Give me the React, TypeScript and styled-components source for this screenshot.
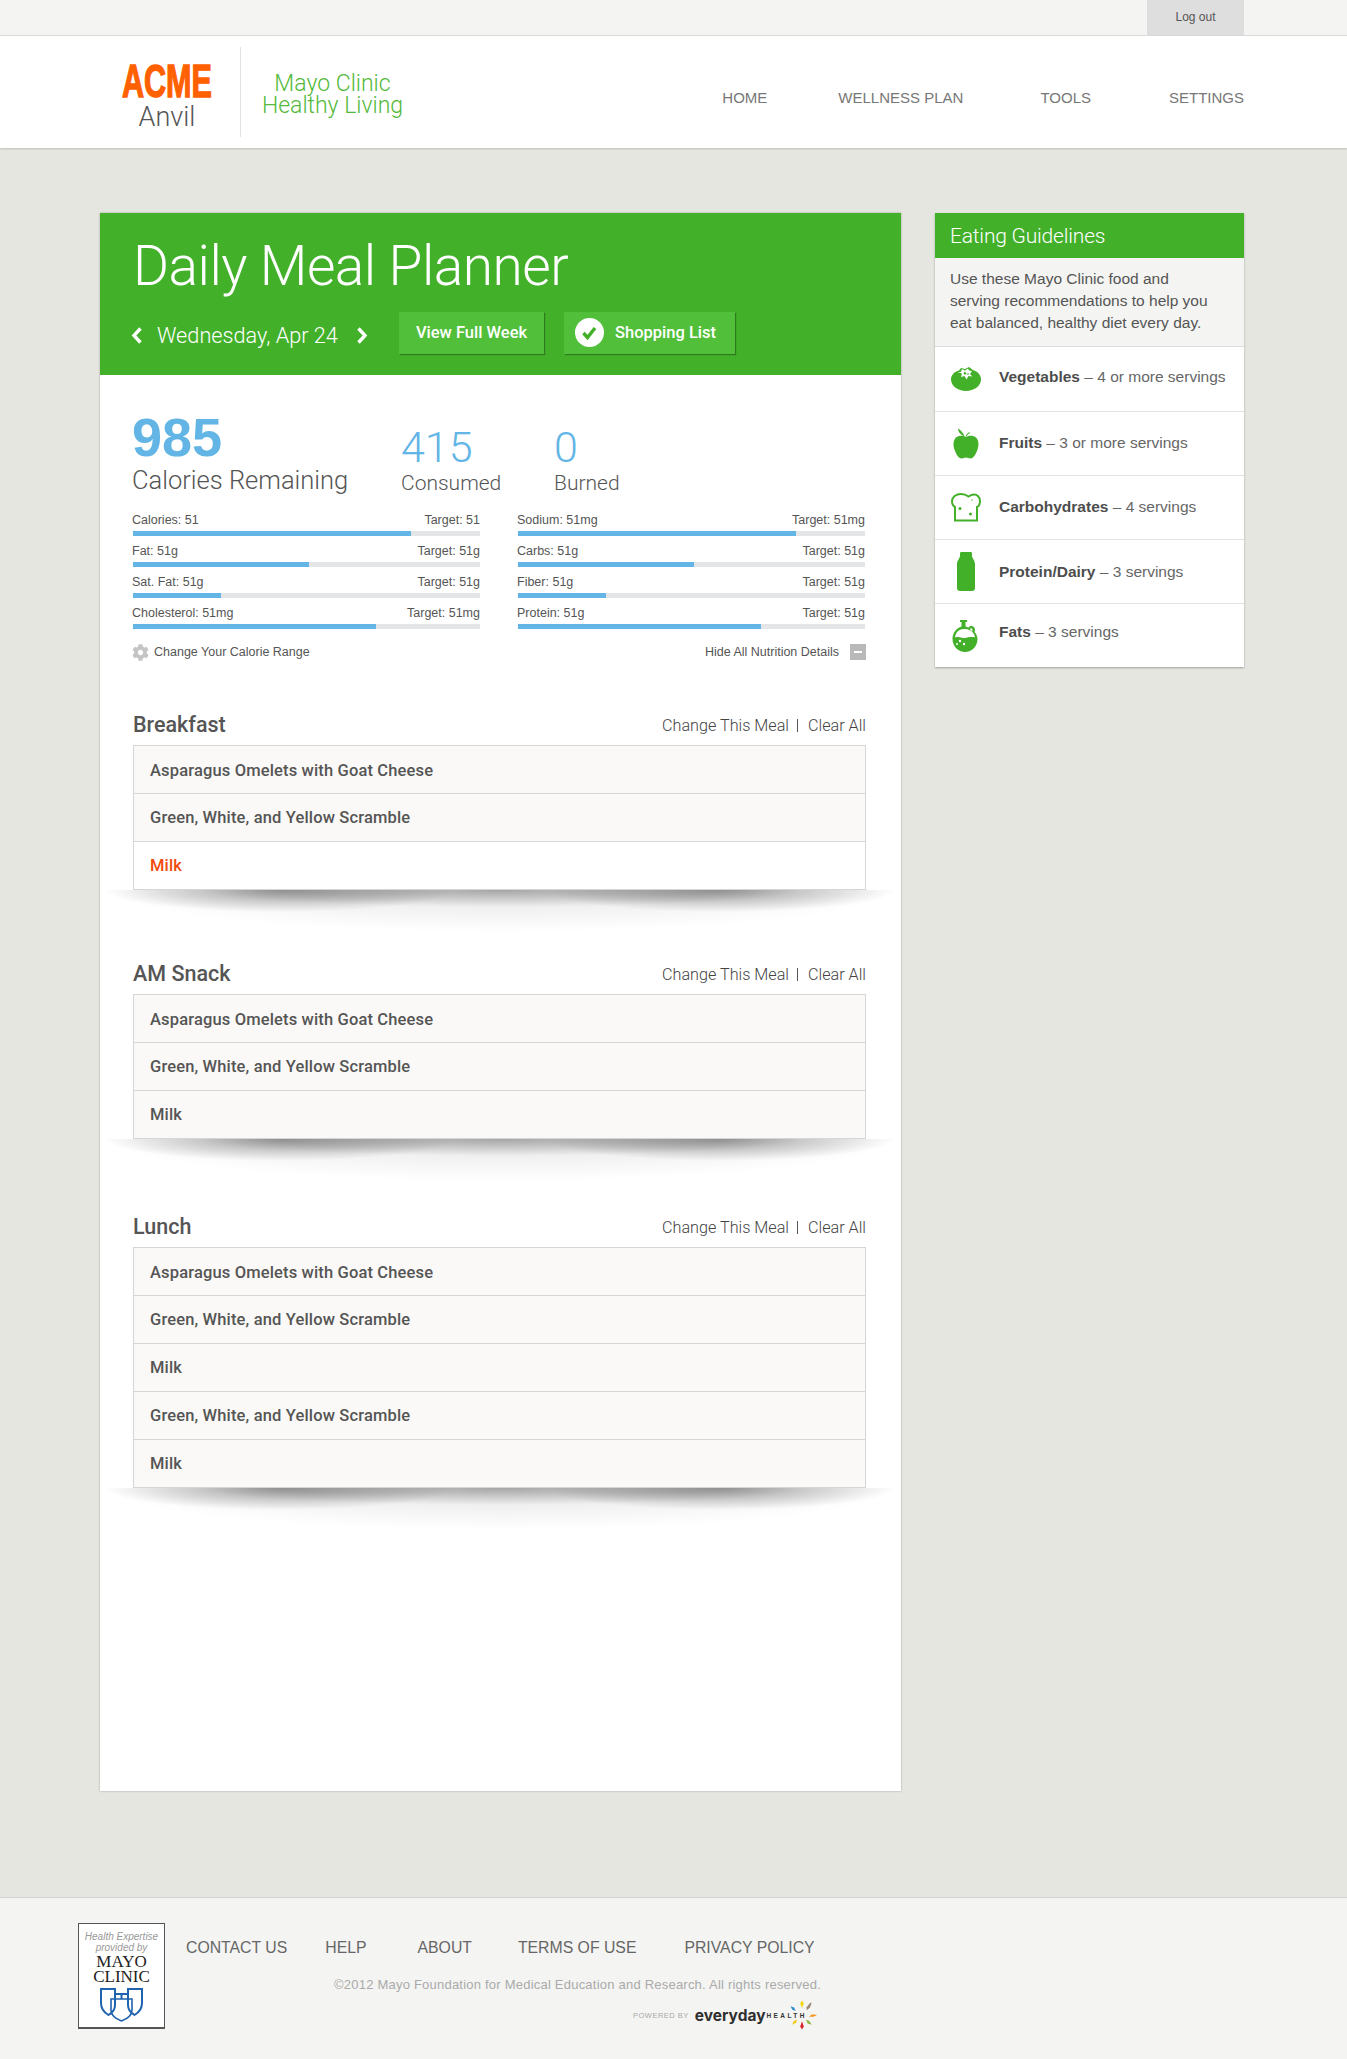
import styled, { createGlobalStyle } from "styled-components";
import { FaCog } from "react-icons/fa";

const SANS = `"Liberation Sans", Arial, sans-serif`;
const LIGHT = `Roboto, "Liberation Sans", sans-serif`;
const GREEN = "#43b02a";

interface INutrient {
    label: string;
    target: string;
    percent: number;
}

interface IMeal {
    title: string;
    gap: number;
    items: { name: string; highlight?: boolean }[];
}

const leftNutrients: INutrient[] = [
    { label: "Calories: 51", target: "Target: 51", percent: 80 },
    { label: "Fat: 51g", target: "Target: 51g", percent: 50.6 },
    { label: "Sat. Fat: 51g", target: "Target: 51g", percent: 25.5 },
    { label: "Cholesterol: 51mg", target: "Target: 51mg", percent: 70 },
];

const rightNutrients: INutrient[] = [
    { label: "Sodium: 51mg", target: "Target: 51mg", percent: 80 },
    { label: "Carbs: 51g", target: "Target: 51g", percent: 50.6 },
    { label: "Fiber: 51g", target: "Target: 51g", percent: 25.5 },
    { label: "Protein: 51g", target: "Target: 51g", percent: 70 },
];

const OMELET = "Asparagus Omelets with Goat Cheese";
const SCRAMBLE = "Green, White, and Yellow Scramble";

const meals: IMeal[] = [
    {
        title: "Breakfast",
        gap: 47,
        items: [{ name: OMELET }, { name: SCRAMBLE }, { name: "Milk", highlight: true }],
    },
    {
        title: "AM Snack",
        gap: 70,
        items: [{ name: OMELET }, { name: SCRAMBLE }, { name: "Milk" }],
    },
    {
        title: "Lunch",
        gap: 74,
        items: [
            { name: OMELET },
            { name: SCRAMBLE },
            { name: "Milk" },
            { name: SCRAMBLE },
            { name: "Milk" },
        ],
    },
];

const GlobalStyle = createGlobalStyle`
    html, body {
        margin: 0;
        padding: 0;
        background: #e6e6e0;
        font-family: ${SANS};
        color: #555;
    }
    * {
        box-sizing: border-box;
    }
`;

const TopBar = styled.div`
    height: 36px;
    background: #f4f4f2;
    border-bottom: 1px solid #dcdcda;
    display: flex;
    justify-content: flex-end;
    padding-right: 103px;
`;

const LogOut = styled.a`
    width: 97px;
    height: 35px;
    background: #dedede;
    color: #555;
    font-size: 12px;
    display: flex;
    align-items: center;
    justify-content: center;
    padding-bottom: 1px;
`;

const Header = styled.header`
    height: 112px;
    background: #fff;
    box-shadow: 0 1px 2px rgba(0, 0, 0, 0.18);
    display: flex;
    align-items: center;
    padding: 0 103px 0 122px;
`;

const Brand = styled.div`
    width: 119px;
    height: 90px;
    border-right: 1px solid #e2e2e0;
    display: flex;
    flex-direction: column;
    align-items: flex-start;
`;

const Acme = styled.div`
    width: 90px;
    margin-top: 15px;
    height: 37px;
    line-height: 37px;
    font-size: 47px;
    font-weight: 700;
    color: #ff6000;
    -webkit-text-stroke: 1.4px #ff6000;
    white-space: nowrap;
    transform: scaleX(0.65);
    transform-origin: left center;
`;

const Anvil = styled.div`
    width: 90px;
    margin-top: 4px;
    text-align: center;
    font-family: ${LIGHT};
    font-weight: 300;
    font-size: 27px;
    line-height: 28px;
    color: #555;
`;

const Program = styled.div`
    margin: 5px 0 0 15px;
    width: 153px;
    text-align: center;
    font-family: ${LIGHT};
    font-weight: 300;
    font-size: 23px;
    line-height: 22px;
    color: #52b93a;
`;

const Nav = styled.nav`
    margin: 10px 0 0 auto;
    display: flex;
    font-size: 15px;
    color: #777;
`;

const NavLink = styled.a<{ $gap: number }>`
    margin-left: ${(props) => props.$gap}px;
`;

const Main = styled.main`
    display: flex;
    align-items: flex-start;
    gap: 34px;
    padding: 65px 103px 0 100px;
`;

const Planner = styled.section`
    width: 801px;
    height: 1578px;
    background: #fff;
    box-shadow: 0 0 2px rgba(0, 0, 0, 0.3);
`;

const PlannerHead = styled.div`
    height: 162px;
    background: ${GREEN};
    color: #fff;
    padding: 20px 0 0 33px;
`;

const Title = styled.h1`
    margin: 0;
    font-family: ${LIGHT};
    font-weight: 300;
    font-size: 55px;
    line-height: 66px;
    letter-spacing: -0.5px;
`;

const DateRow = styled.div`
    display: flex;
    align-items: center;
    margin-top: 13px;
    margin-left: -2px;
    height: 42px;
`;

const Chevron = styled.svg`
    width: 12px;
    height: 17px;
    flex: none;
    fill: none;
    stroke: #fff;
    stroke-width: 3.4;
    margin-top: 4px;
`;

const DateText = styled.span`
    font-family: ${LIGHT};
    font-weight: 300;
    font-size: 21.7px;
    margin: 4px 18px 0 14px;
    width: 181px;
    white-space: nowrap;
`;

const Button = styled.a<{ $width: number; $gap: number }>`
    width: ${(props) => props.$width}px;
    height: 42px;
    background: #52bf3a;
    box-shadow: 1px 1px 1px rgba(0, 0, 0, 0.3);
    font-family: ${LIGHT};
    font-weight: 500;
    font-size: 16.5px;
    display: flex;
    align-items: center;
    justify-content: center;
    gap: 11px;
    margin-left: ${(props) => props.$gap}px;
    padding-bottom: 2px;
    color: #fff;
`;

const CheckBadge = styled.svg`
    width: 29px;
    height: 29px;
    margin-left: -8px;
`;

const PlannerBody = styled.div`
    padding: 0 35px 0 32px;
`;

const Stats = styled.div`
    display: flex;
    height: 136px;
`;

const Stat = styled.div<{ $width: number; $top: number }>`
    width: ${(props) => props.$width}px;
    padding-top: ${(props) => props.$top}px;
`;

const BigNumber = styled.div`
    font-size: 54px;
    line-height: 54px;
    font-weight: 700;
    color: #62b5e5;
`;

const StatNumber = styled.div`
    font-family: ${LIGHT};
    font-weight: 300;
    font-size: 43px;
    line-height: 44px;
    color: #62b5e5;
`;

const BigLabel = styled.div`
    font-family: ${LIGHT};
    font-weight: 300;
    font-size: 25.5px;
    line-height: 30px;
    margin-top: 1px;
    white-space: nowrap;
`;

const StatLabel = styled.div`
    font-family: ${LIGHT};
    font-weight: 300;
    font-size: 21px;
    line-height: 28px;
`;

const NutritionGrid = styled.div`
    display: grid;
    grid-template-columns: 347px 347px;
    column-gap: 38px;
    padding-left: 1px;
`;

const NutrientRow = styled.div`
    height: 31px;
`;

const NutrientText = styled.div`
    display: flex;
    justify-content: space-between;
    font-size: 12.5px;
    line-height: 18px;
    height: 18px;
    margin-left: -1px;
    color: #555;
`;

const Track = styled.div`
    height: 5px;
    margin-top: 2px;
    background: #e3e5e7;
`;

const Fill = styled.div`
    height: 100%;
    background: #62b5e5;
`;

const DetailRow = styled.div`
    display: flex;
    justify-content: space-between;
    align-items: center;
    margin-top: 5px;
    height: 24px;
    font-size: 12.5px;
    color: #555;
`;

const RangeLink = styled.a`
    display: flex;
    align-items: center;
    gap: 5px;
    svg {
        width: 17px;
        height: 17px;
        color: #c4c4c4;
    }
`;

const HideLink = styled.a`
    display: flex;
    align-items: center;
    gap: 11px;
`;

const MinusBox = styled.span`
    width: 16px;
    height: 16px;
    background: #b9b9b9;
    display: flex;
    align-items: center;
    justify-content: center;
    &::before {
        content: "";
        width: 8px;
        height: 2px;
        background: #fff;
    }
`;

const MealSection = styled.section<{ $gap: number }>`
    margin-top: ${(props) => props.$gap}px;
    margin-left: 1px;
`;

const MealHead = styled.div`
    display: flex;
    justify-content: space-between;
    align-items: center;
    height: 26px;
    margin-bottom: 8px;
`;

const MealTitle = styled.h2`
    margin: 0;
    font-family: ${LIGHT};
    font-weight: 500;
    font-size: 21.5px;
    color: #555;
`;

const MealActions = styled.div`
    font-family: ${LIGHT};
    font-weight: 300;
    font-size: 16.2px;
    color: #444;
    margin-top: 3px;
    display: flex;
    align-items: center;
`;

const ActionDivider = styled.span`
    width: 1px;
    height: 13px;
    background: #555;
    margin: 0 10px 0 8px;
`;

const MealBox = styled.div`
    position: relative;
    border: 1px solid #d6d6d4;
    &::after {
        content: "";
        position: absolute;
        top: 100%;
        left: -34px;
        right: -36px;
        height: 44px;
        margin-top: 1px;
        pointer-events: none;
        background:
            radial-gradient(ellipse 175px 22px at 180px 0, rgba(0, 0, 0, 0.36), transparent),
            radial-gradient(ellipse 175px 22px at 620px 0, rgba(0, 0, 0, 0.36), transparent),
            radial-gradient(ellipse 300px 17px at 50% 0, rgba(0, 0, 0, 0.28), transparent),
            radial-gradient(ellipse 398px 42px at 50% 0, rgba(0, 0, 0, 0.1), transparent);
    }
`;

const MealItem = styled.div<{ $highlight?: boolean }>`
    height: 47px;
    padding: 1px 0 0 16px;
    display: flex;
    align-items: center;
    font-family: ${LIGHT};
    font-weight: 500;
    font-size: 16.5px;
    letter-spacing: 0.15px;
    background: ${(props) => (props.$highlight ? "#fff" : "#faf9f7")};
    color: ${(props) => (props.$highlight ? "#f2490c" : "#555")};
    & + & {
        box-sizing: content-box;
        padding-top: 0;
        border-top: 1px solid #d6d6d4;
    }
`;

const Sidebar = styled.aside`
    width: 309px;
    background: #fff;
    box-shadow: 0 1px 2px rgba(0, 0, 0, 0.3);
`;

const SideHead = styled.div`
    height: 45px;
    background: ${GREEN};
    color: #fff;
    font-family: ${LIGHT};
    font-weight: 300;
    font-size: 21px;
    letter-spacing: -0.2px;
    padding-left: 15px;
    display: flex;
    align-items: center;
`;

const SideIntro = styled.p`
    margin: 0;
    height: 89px;
    background: #f4f4f2;
    border-bottom: 1px solid #ddd;
    padding: 10px 30px 0 15px;
    font-size: 15.5px;
    line-height: 22px;
    color: #555;
`;

const GuideRow = styled.div`
    height: 64px;
    display: flex;
    align-items: center;
    & + & {
        border-top: 1px solid #e2e2de;
    }
`;

const GuideIcon = styled.div`
    width: 64px;
    flex: none;
    display: flex;
    justify-content: center;
    padding-right: 3px;
    svg {
        display: block;
        fill: ${GREEN};
    }
`;

const GuideText = styled.div<{ $lift?: number }>`
    font-size: 15.5px;
    color: #666;
    white-space: nowrap;
    margin-bottom: ${(props) => props.$lift ?? 0}px;
    strong {
        color: #4d4d4d;
    }
`;

const Footer = styled.footer`
    margin-top: 106px;
    height: 162px;
    background: #f4f4f2;
    border-top: 1px solid #d4d4d0;
    padding: 25px 0 0 78px;
    display: flex;
`;

const Seal = styled.div`
    width: 87px;
    height: 106px;
    background: #fff;
    border: 1px solid #555;
    border-bottom-width: 2px;
    text-align: center;
    padding-top: 7px;
`;

const SealNote = styled.div`
    font-style: italic;
    font-size: 10px;
    line-height: 11px;
    color: #999;
`;

const SealName = styled.div`
    font-family: "Liberation Serif", serif;
    font-size: 17px;
    line-height: 14.5px;
    color: #222;
    margin-top: 2px;
`;

const ShieldMark = styled.svg`
    display: block;
    margin: 4px auto 0;
    fill: none;
    stroke: #1f62ad;
`;

const FooterMain = styled.div`
    margin-left: 21px;
    width: 650px;
`;

const FooterNav = styled.nav`
    display: flex;
    font-size: 15.8px;
    color: #666;
    margin-top: 16px;
`;

const FooterLink = styled.a<{ $gap: number }>`
    margin-left: ${(props) => props.$gap}px;
`;

const Copyright = styled.div`
    margin-top: 20px;
    margin-left: 148px;
    font-size: 13px;
    line-height: 16px;
    letter-spacing: 0.22px;
    color: #aaa;
    white-space: nowrap;
`;

const Powered = styled.div`
    display: flex;
    align-items: center;
    margin: 7px 0 0 447px;
    height: 30px;
    white-space: nowrap;
`;

const PoweredBy = styled.span`
    font-size: 7.5px;
    letter-spacing: 0.5px;
    color: #aaa;
    margin-right: 6px;
`;

const Everyday = styled.span`
    font-family: Inter, ${SANS};
    font-weight: 700;
    font-size: 15.5px;
    color: #2f2f2f;
`;

const HealthMark = styled.span`
    font-size: 6.5px;
    font-weight: 700;
    letter-spacing: 2.4px;
    color: #333;
    margin-left: 1px;
`;

const Burst = styled.svg`
    width: 30px;
    height: 30px;
    margin-left: -20px;
`;

function NutrientList({ rows }: { rows: INutrient[] }) {
    return (
        <div>
            {rows.map((row) => (
                <NutrientRow key={row.label}>
                    <NutrientText>
                        <span>{row.label}</span>
                        <span>{row.target}</span>
                    </NutrientText>
                    <Track>
                        <Fill style={{ width: `${row.percent}%` }} />
                    </Track>
                </NutrientRow>
            ))}
        </div>
    );
}

function App() {
    return (
        <>
            <GlobalStyle />
            <TopBar>
                <LogOut>Log out</LogOut>
            </TopBar>
            <Header>
                <Brand>
                    <Acme>ACME</Acme>
                    <Anvil>Anvil</Anvil>
                </Brand>
                <Program>
                    Mayo Clinic
                    <br />
                    Healthy Living
                </Program>
                <Nav>
                    <NavLink $gap={0}>HOME</NavLink>
                    <NavLink $gap={71}>WELLNESS PLAN</NavLink>
                    <NavLink $gap={77}>TOOLS</NavLink>
                    <NavLink $gap={78}>SETTINGS</NavLink>
                </Nav>
            </Header>
            <Main>
                <Planner>
                    <PlannerHead>
                        <Title>Daily Meal Planner</Title>
                        <DateRow>
                            <Chevron viewBox="0 0 12 17">
                                <path d="M9.500 1.500 3 8.500l6.500 7" />
                            </Chevron>
                            <DateText>Wednesday, Apr 24</DateText>
                            <Chevron viewBox="0 0 12 17">
                                <path d="M2.500 1.500 9 8.500l-6.500 7" />
                            </Chevron>
                            <Button $width={145} $gap={31}>
                                View Full Week
                            </Button>
                            <Button $width={171} $gap={20}>
                                <CheckBadge viewBox="0 0 29 29">
                                    <circle cx="14.500" cy="14.500" r="14.500" fill="#fff" />
                                    <path
                                        d="M8.500 15l4 4.500 7.500-9.500"
                                        fill="none"
                                        stroke={GREEN}
                                        strokeWidth="3.400"
                                    />
                                </CheckBadge>
                                Shopping List
                            </Button>
                        </DateRow>
                    </PlannerHead>
                    <PlannerBody>
                        <Stats>
                            <Stat $width={269} $top={35}>
                                <BigNumber>985</BigNumber>
                                <BigLabel>Calories Remaining</BigLabel>
                            </Stat>
                            <Stat $width={153} $top={50}>
                                <StatNumber>415</StatNumber>
                                <StatLabel>Consumed</StatLabel>
                            </Stat>
                            <Stat $width={100} $top={50}>
                                <StatNumber>0</StatNumber>
                                <StatLabel>Burned</StatLabel>
                            </Stat>
                        </Stats>
                        <NutritionGrid>
                            <NutrientList rows={leftNutrients} />
                            <NutrientList rows={rightNutrients} />
                        </NutritionGrid>
                        <DetailRow>
                            <RangeLink>
                                <FaCog />
                                Change Your Calorie Range
                            </RangeLink>
                            <HideLink>
                                Hide All Nutrition Details
                                <MinusBox />
                            </HideLink>
                        </DetailRow>
                        {meals.map((meal) => (
                            <MealSection key={meal.title} $gap={meal.gap}>
                                <MealHead>
                                    <MealTitle>{meal.title}</MealTitle>
                                    <MealActions>
                                        Change This Meal
                                        <ActionDivider />
                                        Clear All
                                    </MealActions>
                                </MealHead>
                                <MealBox>
                                    {meal.items.map((item, index) => (
                                        <MealItem key={index} $highlight={item.highlight}>
                                            {item.name}
                                        </MealItem>
                                    ))}
                                </MealBox>
                            </MealSection>
                        ))}
                    </PlannerBody>
                </Planner>
                <Sidebar>
                    <SideHead>Eating Guidelines</SideHead>
                    <SideIntro>
                        Use these Mayo Clinic food and serving recommendations to help you eat
                        balanced, healthy diet every day.
                    </SideIntro>
                    <GuideRow>
                        <GuideIcon>
                            <svg width="30" height="24" viewBox="0 0 30 24">
                                <path d="M8 3.500 10 1l4 1L18 0l4 3C27 4.500 30 8 30 12.500 30 19 23 24 15 24S0 19 0 12.500C0 8 3.500 4.500 8 3.500Z" />
                                <path
                                    d="M6.500 5 10 5l1-3 3 1.500L17 1.500l1 2 3 .5-2 3 2.500 2.500-4-.5-2 3.500-2-3.500-3.500 1 1-3.500Z"
                                    fill="#fff"
                                />
                                <path d="M14 4.500l1.500 2-2 1.500-1-2ZM17 6l1 1-1 1-1-1Z" />
                            </svg>
                        </GuideIcon>
                        <GuideText $lift={5}>
                            <strong>Vegetables</strong> – 4 or more servings
                        </GuideText>
                    </GuideRow>
                    <GuideRow>
                        <GuideIcon>
                            <svg width="26" height="31" viewBox="0 0 26 31">
                                <path d="M13 9c3-1.500 7-2 10 .5 3 3 3 8 1.500 12-1.500 4.500-4 9-7 9-2 0-3-1-4.500-1s-2.500 1-4.500 1c-3 0-5.500-4.500-7-9C0 17.500 0 12.500 3 9.500 6 7 10 7.500 13 9Z" />
                                <path d="M11.500 8.500C10.500 5 8 2.500 5 .5 5 4 8 7 11.500 8.500ZM12.500 8.500c.5-2 2-3.500 4.500-4.500l-.5 1.500c-1.500.5-2.500 1.500-3 3Z" />
                            </svg>
                        </GuideIcon>
                        <GuideText $lift={1}>
                            <strong>Fruits</strong> – 3 or more servings
                        </GuideText>
                    </GuideRow>
                    <GuideRow>
                        <GuideIcon>
                            <svg width="30" height="29" viewBox="0 0 30 29">
                                <path
                                    d="M4 27.500h22V14c2.500-1 3-3.500 3-6 0-4-3-6.500-6-6.500-2.500 0-4 1-5.500 2C15.500 2 13 1 10 1 5 1 1 4 1 8c0 2.500 1 5 3 6Z"
                                    fill="none"
                                    stroke={GREEN}
                                    strokeWidth="2"
                                />
                                <circle cx="9" cy="15.500" r="1.500" />
                                <circle cx="19.500" cy="21" r="1.500" />
                                <circle cx="21" cy="7" r="1" opacity="0.5" />
                            </svg>
                        </GuideIcon>
                        <GuideText $lift={1}>
                            <strong>Carbohydrates</strong> – 4 servings
                        </GuideText>
                    </GuideRow>
                    <GuideRow>
                        <GuideIcon>
                            <svg width="18" height="39" viewBox="0 0 18 39">
                                <path d="M4.500 0h9C14.500 0 15 .5 15 1.500V4c0 2 3 4.500 3 8v24c0 2-1 3-3 3H3c-2 0-3-1-3-3V12c0-3.500 3-6 3-8V1.500C3 .5 3.500 0 4.500 0Z" />
                            </svg>
                        </GuideIcon>
                        <GuideText>
                            <strong>Protein/Dairy</strong> – 3 servings
                        </GuideText>
                    </GuideRow>
                    <GuideRow>
                        <GuideIcon>
                            <svg width="27" height="32" viewBox="0 0 27 32">
                                <path d="M8 0h7v2h-1.500v4.500c1 .2 2 .7 2.800 1.200C17.500 5.500 21 5.500 22.500 8c.8 1.500.5 3 0 4 1.800 2 3 4.500 3 7 0 7-5.500 13-12.500 13S.5 26 .5 19c0-6 4-11 9-12.500V2H8ZM17.800 9c.9.800 1.700 1.500 2.500 2.300.3-.8.300-1.500 0-2.200-.5-1-1.700-1.100-2.500-.1Z" />
                                <path
                                    d="M3 17.500c4-1.500 7 1 10 .5s6-1.500 10-.5c-.5-4-3-8-10-8.500S3.500 13.500 3 17.500Z"
                                    fill="#fff"
                                />
                                <circle cx="8" cy="21" r="1.200" fill="#fff" />
                                <circle cx="12" cy="24" r="1.200" fill="#fff" />
                                <circle cx="5" cy="24" r="1" fill="#fff" />
                            </svg>
                        </GuideIcon>
                        <GuideText $lift={7}>
                            <strong>Fats</strong> – 3 servings
                        </GuideText>
                    </GuideRow>
                </Sidebar>
            </Main>
            <Footer>
                <Seal>
                    <SealNote>
                        Health Expertise
                        <br />
                        provided by
                    </SealNote>
                    <SealName>
                        MAYO
                        <br />
                        CLINIC
                    </SealName>
                    <ShieldMark width="43" height="34" viewBox="0 0 43 34">
                        <path d="M1 1h14v16c0 5-3 8-6.500 10C4 24.500 1 21 1 15Z" strokeWidth="2" />
                        <path d="M28 1h14v14c0 6-3 9.500-7.500 12-3.500-2-6.500-5-6.500-10Z" strokeWidth="2" />
                        <path d="M11 11h21v11c0 5-4 8.500-10.500 11C15 30.500 11 27 11 22Z" strokeWidth="1.600" />
                        <path d="M15 6h13M21.500 11v-5" strokeWidth="2" />
                    </ShieldMark>
                </Seal>
                <FooterMain>
                    <FooterNav>
                        <FooterLink $gap={0}>CONTACT US</FooterLink>
                        <FooterLink $gap={38}>HELP</FooterLink>
                        <FooterLink $gap={51}>ABOUT</FooterLink>
                        <FooterLink $gap={46}>TERMS OF USE</FooterLink>
                        <FooterLink $gap={48}>PRIVACY POLICY</FooterLink>
                    </FooterNav>
                    <Copyright>
                        ©2012 Mayo Foundation for Medical Education and Research. All rights reserved.
                    </Copyright>
                    <Powered>
                        <PoweredBy>POWERED BY</PoweredBy>
                        <Everyday>everyday</Everyday>
                        <HealthMark>HEALTH</HealthMark>
                        <Burst viewBox="0 0 34 34">
                            <path d="M17 0.500 19 4l-2 5-2-5Z" fill="#f2d60a" />
                            <path d="M28 3l-2 5.500-3.500 3-.5-3 4-5Z" fill="#9c8b7a" />
                            <path d="M34 17l-4 2h-5l3-2.500h3Z" fill="#f7941d" />
                            <path d="M28 28l-4.500-1.500-2-4 3.500 1Z" fill="#8cb63c" />
                            <path d="M17 33.500 15 30l2-6 2 6Z" fill="#d8232a" />
                            <path d="M6 28l1.500-4 4-2-1 3.500Z" fill="#f2c80f" />
                            <path d="M4 7l4 1.500 2 4-4-1.500Z" fill="#2b8fcb" />
                        </Burst>
                    </Powered>
                </FooterMain>
            </Footer>
        </>
    );
}

export default App;
